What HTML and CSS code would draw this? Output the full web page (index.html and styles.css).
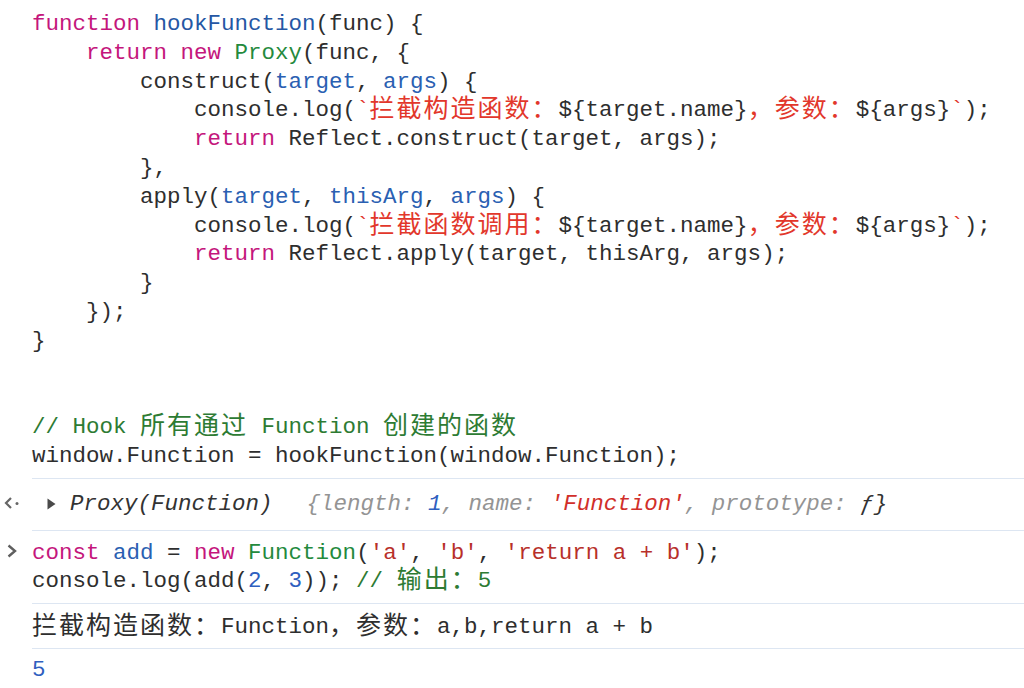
FILE: index.html
```html
<!DOCTYPE html>
<html lang="zh-CN">
<head>
<meta charset="utf-8">
<title>Console</title>
<link rel="stylesheet" href="styles.css">
</head>
<body>
<div class="console">
  <div class="entry">
    <div class="gutter"></div>
    <div class="body first"><pre class="code"><span class="kw">function</span> <span class="def">hookFunction</span>(func) {
    <span class="kw">return</span> <span class="kw">new</span> <span class="bi">Proxy</span>(func, {
        construct(<span class="par">target</span>, <span class="par">args</span>) {
            console.log(<span class="tpl">`<span class="zh">拦截构造函数：</span></span>${target.name}<span class="tpl zh">，参数：</span>${args}<span class="tpl">`</span>);
            <span class="kw">return</span> Reflect.construct(target, args);
        },
        apply(<span class="par">target</span>, <span class="par">thisArg</span>, <span class="par">args</span>) {
            console.log(<span class="tpl">`<span class="zh">拦截函数调用：</span></span>${target.name}<span class="tpl zh">，参数：</span>${args}<span class="tpl">`</span>);
            <span class="kw">return</span> Reflect.apply(target, thisArg, args);
        }
    });
}


<span class="cm">// Hook <span class="zh">所有通过</span> Function <span class="zh">创建的函数</span></span>
window.Function = hookFunction(window.Function);</pre></div>
  </div>

  <div class="entry">
    <div class="gutter result-icon">
      <svg width="18" height="14" viewBox="0 0 18 14"><path d="M8 2 L3 7 L8 12" fill="none" stroke="#666666" stroke-width="2.2"/><circle cx="14" cy="7.5" r="1.5" fill="#666666"/></svg>
    </div>
    <div class="body result"><div class="code italic"><span class="tri"><svg width="9" height="12" viewBox="0 0 9 12"><path d="M0.5 0.5 L8.5 6 L0.5 11.5 Z" fill="#4a4a4a"/></svg></span><span class="obj">Proxy(Function)</span><span class="preview"><span class="gray">{length:</span> <span class="num">1</span><span class="gray">, name:</span> <span class="str2">'Function'</span><span class="gray">, prototype:</span> <span class="obj">ƒ}</span></span></div></div>
  </div>

  <div class="entry">
    <div class="gutter prompt-icon">
      <svg width="14" height="16" viewBox="0 0 14 16"><path d="M3.5 2.5 L10 8 L3.5 13.5" fill="none" stroke="#5f5f5f" stroke-width="2.4"/></svg>
    </div>
    <div class="body input"><pre class="code"><span class="kw">const</span> <span class="par">add</span> = <span class="kw">new</span> <span class="bi">Function</span>(<span class="str">'a'</span>, <span class="str">'b'</span>, <span class="str">'return a + b'</span>);
console.log(add(<span class="num">2</span>, <span class="num">3</span>)); <span class="cm">// <span class="zh">输出：</span>5</span></pre></div>
  </div>

  <div class="entry">
    <div class="gutter"></div>
    <div class="body log"><pre class="code"><span class="zh">拦截构造函数：</span>Function<span class="zh">，参数：</span>a,b,return a + b</pre></div>
  </div>

  <div class="entry">
    <div class="gutter"></div>
    <div class="body last"><pre class="code"><span class="num">5</span></pre></div>
  </div>
</div>
</body>
</html>
```

FILE: styles.css
```css
html, body {
  margin: 0;
  padding: 0;
  background: #ffffff;
}

.console {
  width: 1024px;
  height: 688px;
  overflow: hidden;
  font-family: "Liberation Mono", "Noto Sans CJK SC", monospace;
  font-size: 22.5px;
  line-height: 28.8px;
  color: #2e2e2e;
}

.entry {
  display: flex;
}

.gutter {
  width: 32px;
  flex: none;
  display: flex;
  justify-content: flex-start;
}

.body {
  flex: 1;
  border-bottom: 1px solid #dde6f2;
}

.body.first { padding: 10px 0 7px; }
.body.result { padding: 11px 0 11px; }
.body.input { padding: 8px 0 7px; }
.body.log { padding: 9px 0 6px; }
.body.last { padding: 7px 0 0; border-bottom: none; }

.result-icon { padding: 17px 0 0 3px; box-sizing: border-box; }
.prompt-icon { padding: 12px 0 0 5px; box-sizing: border-box; }

.code {
  margin: 0;
  font: inherit;
  white-space: pre;
}

.zh {
  font-family: "Noto Sans CJK SC", sans-serif;
  font-size: 25px;
  line-height: 0;
  letter-spacing: 2px;
  vertical-align: -1px;
}

.kw { color: #c4167c; }
.def { color: #2557a4; }
.par { color: #2a60b2; }
.bi { color: #248a3d; }
.tpl { color: #e2372b; }
.str { color: #b8302a; }
.cm { color: #2d7b33; }
.num { color: #2f5fbf; }

.italic { font-style: italic; display: flex; align-items: center; height: 28.8px; }
.tri { display: inline-flex; width: 38px; padding-left: 15px; box-sizing: border-box; }
.obj { color: #333333; }
.preview { margin-left: 34px; }
.gray { color: #949494; }
.str2 { color: #d12f2a; }
```
